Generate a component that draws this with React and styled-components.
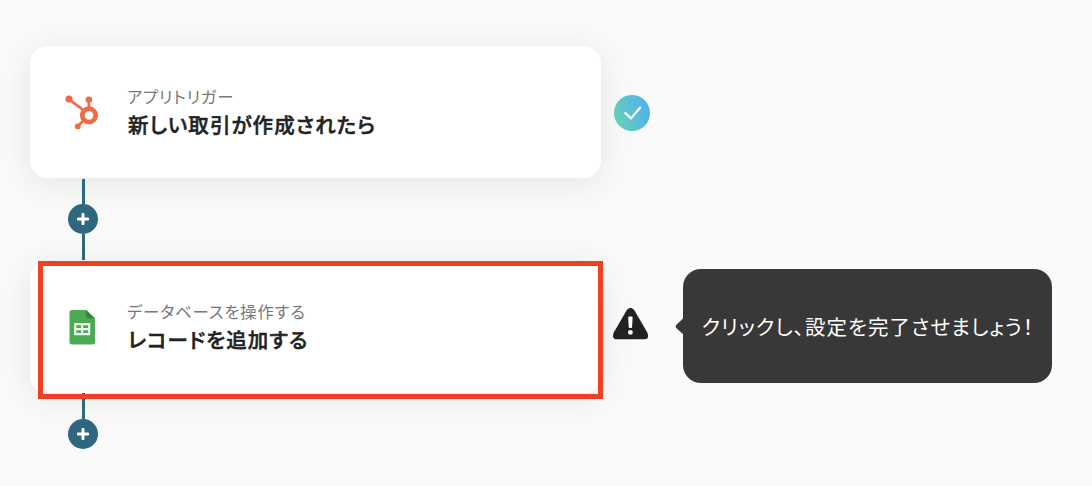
import React from "react";
import { styled, createGlobalStyle } from "styled-components";

const GlobalStyle = createGlobalStyle`
  * {
    box-sizing: border-box;
  }
  body {
    margin: 0;
    background-color: #fafafa;
    font-family: "Noto Sans CJK JP", "Noto Sans", sans-serif;
    font-feature-settings: "palt";
  }
`;

const Page = styled.main`
  display: flex;
  flex-direction: column;
  min-height: 486px;
  padding: 46px 0 0 30px;
  overflow: hidden;
`;

const StepRow = styled.div`
  display: flex;
  align-items: flex-start;
  height: 132px;
`;

const Card = styled.div`
  position: relative;
  display: flex;
  align-items: center;
  flex: none;
  width: 571px;
  height: 132px;
  padding-left: 30px;
  border-radius: 17px;
  background-color: #fff;
  box-shadow: 0 5px 36px rgba(0, 0, 0, 0.095);
`;

const Highlight = styled.div`
  position: absolute;
  z-index: 2;
  top: 0;
  left: 8px;
  width: 565px;
  height: 138px;
  border: 5px solid #ee4023;
`;

const AppIcon = styled.div`
  flex: none;
  width: 44px;
  height: 44px;
  margin-right: 23px;
  svg {
    display: block;
  }
`;

const Kind = styled.p`
  margin: 0;
  color: #777;
  font-size: 16.4px;
  line-height: 25px;
  letter-spacing: 0.8px;
  white-space: nowrap;
`;

const Title = styled.h2`
  margin: 0 0 2px;
  padding-left: 1px;
  color: #222;
  font-size: 20.5px;
  font-weight: 500;
  line-height: 30px;
  letter-spacing: 1.06px;
  white-space: nowrap;
  -webkit-text-stroke: 0.5px #222;
`;

const Status = styled.div`
  display: flex;
  flex: none;
  width: 36px;
  height: 36px;
  margin-top: ${(props) => props.$top}px;
  margin-left: ${(props) => props.$gap}px;
`;

const Connector = styled.div`
  position: relative;
  display: flex;
  flex-direction: column;
  align-items: center;
  width: 30px;
  margin-left: 38px;
  padding: ${(props) => props.$pad};
`;

const Line = styled.div`
  width: 3px;
  height: ${(props) => props.$length}px;
  background-color: #2d6a80;
`;

const AddButton = styled.button`
  display: flex;
  align-items: center;
  justify-content: center;
  flex: none;
  width: 30px;
  height: 30px;
  padding: 0;
  border: none;
  border-radius: 50%;
  background-color: #2f6680;
`;

const Tooltip = styled.div`
  position: relative;
  display: flex;
  align-items: center;
  flex: none;
  width: 369px;
  height: 114px;
  margin-top: 8px;
  margin-left: 34px;
  padding-left: 18.5px;
  border-radius: 18px;
  background-color: #383838;
  color: #fff;
  font-size: 20.5px;
  letter-spacing: 1.03px;
  white-space: nowrap;
`;

const Arrow = styled.svg`
  position: absolute;
  left: -8px;
  top: 48px;
`;

function HubSpotIcon() {
  return (
    <svg width="44" height="44" viewBox="0 0 44 44" fill="none" stroke="#f06a45">
      <circle cx="29" cy="25.3" r="6.7" strokeWidth="4.7" />
      <path d="M9 9.3L24 20.5M28.9 10.5v8M17.5 36.5l6-6" strokeWidth="2.7" />
      <circle cx="9" cy="9" r="3.6" fill="#f06a45" stroke="none" />
      <circle cx="28.9" cy="9.8" r="3.3" fill="#f06a45" stroke="none" />
      <circle cx="17.7" cy="36.4" r="2.9" fill="#f06a45" stroke="none" />
    </svg>
  );
}

function SheetsIcon() {
  return (
    <svg width="44" height="44" viewBox="0 0 44 44">
      <path
        d="M12 5h14.2l8.8 8.6V37a2.5 2.5 0 0 1-2.5 2.5H12A2.5 2.5 0 0 1 9.5 37V7.5A2.5 2.5 0 0 1 12 5z"
        fill="#4caa52"
      />
      <path d="M26.2 5l8.8 8.6h-6.8a2 2 0 0 1-2-2z" fill="#38833e" />
      <path d="M14.2 18h16v12.2h-16z" fill="#f3fbf3" />
      <path
        d="M16.3 20.3h4.9v2.7h-4.9zM23.2 20.3h4.9v2.7h-4.9zM16.3 25.2h4.9v2.7h-4.9zM23.2 25.2h4.9v2.7h-4.9z"
        fill="#4caa52"
      />
    </svg>
  );
}

function CheckIcon() {
  return (
    <svg width="36" height="36" viewBox="0 0 36 36" fill="none">
      <defs>
        <linearGradient id="done" x1="0" y1="0.65" x2="1" y2="0.35">
          <stop offset="0" stopColor="#68d4b9" />
          <stop offset="0.75" stopColor="#55b8e2" />
          <stop offset="1" stopColor="#52b2ea" />
        </linearGradient>
      </defs>
      <circle cx="18" cy="18" r="18" fill="url(#done)" />
      <path
        d="M11.3 18.1l5.7 5.3 9-10.7"
        stroke="#fff"
        strokeWidth="2.2"
        strokeLinecap="round"
        strokeLinejoin="round"
      />
    </svg>
  );
}

function WarningIcon() {
  return (
    <svg width="36" height="36" viewBox="0 0 36 36">
      <path
        d="M13.8 2.1Q17.5 -2.3 21.2 2.1L34.3 24.5Q36.8 31 31.3 31.3H4Q-1.8 31 .8 24.5z"
        fill="#222"
      />
      <path
        d="M15.2 9.7q0-1.2 1.2-1.2h2q1.2 0 1.2 1.2l-.5 9.2q-.1 1.2-1.7 1.2t-1.7-1.2z"
        fill="#fff"
      />
      <circle cx="17.4" cy="24.4" r="2.4" fill="#fff" />
    </svg>
  );
}

function Add() {
  return (
    <AddButton>
      <svg width="12" height="12" viewBox="0 0 12 12">
        <path
          d="M6 1.3v9.4M1.3 6h9.4"
          stroke="#fff"
          strokeWidth="3"
          strokeLinecap="round"
        />
      </svg>
    </AddButton>
  );
}

function Step({ icon, kind, title, highlighted }) {
  return (
    <Card>
      <AppIcon>{icon}</AppIcon>
      <div>
        <Kind>{kind}</Kind>
        <Title>{title}</Title>
      </div>
      {highlighted && <Highlight />}
    </Card>
  );
}

export default function App() {
  return (
    <>
      <GlobalStyle />
      <Page>
        <StepRow>
          <Step
            icon={<HubSpotIcon />}
            kind="アプリトリガー"
            title="新しい取引が作成されたら"
          />
          <Status $top={49} $gap={13}>
            <CheckIcon />
          </Status>
        </StepRow>
        <Connector $pad="1px 0">
          <Line $length={25} />
          <Add />
          <Line $length={26} />
        </Connector>
        <StepRow>
          <Step
            icon={<SheetsIcon />}
            kind="データベースを操作する"
            title="レコードを追加する"
            highlighted
          />
          <Status $top={47} $gap={12}>
            <WarningIcon />
          </Status>
          <Tooltip>
            <Arrow width="9" height="19" viewBox="0 0 9 19">
              <path d="M9 0.5L1.2 8Q0 9.5 1.2 11L9 18z" fill="#383838" />
            </Arrow>
            クリックし、設定を完了させましょう！
          </Tooltip>
        </StepRow>
        <Connector $pad="0">
          <Line $length={26} />
          <Add />
        </Connector>
      </Page>
    </>
  );
}
